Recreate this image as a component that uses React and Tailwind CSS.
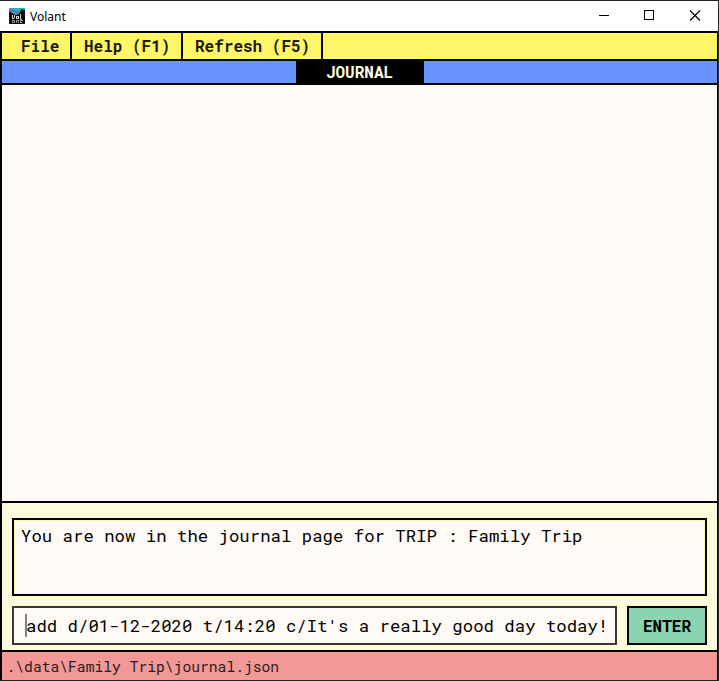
const mono = "font-['Roboto_Mono','DejaVu_Sans_Mono',monospace] whitespace-pre";

function AppIcon() {
  return (
    <svg width="16" height="16" viewBox="0 0 16 16" shapeRendering="crispEdges">
      <rect width="16" height="16" fill="#0a0a0c" />
      <path d="M0 0h16v2h-2v-1h-2v2h-1v2h-1v1H8v1H6V6H4V5H2V4H0z" fill="#12b5b8" />
      <path d="M0 2h5v1h4v1h2v1H7V4H0z" fill="#a44db4" />
      <path d="M3.500 7v3h1v1M5.500 7v3" fill="none" stroke="#d8d8d8" />
      <path d="M7.500 8.500h2v2h-2zM11.500 6v5h1" fill="none" stroke="#d0d0d0" />
      <path d="M3.500 12.500h2v2h-2zM7.500 15v-2.500h2V15M11.500 11v3.500h1.500M10.500 12.500h3" fill="none" stroke="#8f8f8f" />
    </svg>
  );
}

function TitleBar() {
  return (
    <header className="flex h-[31px] shrink-0 items-center border-t border-r border-[#222124] bg-white">
      <div className="ml-[9px]"><AppIcon /></div>
      <span className="ml-[5px] mt-[2px] font-['Noto_Sans',sans-serif] text-[12px] leading-4 text-black">Volant</span>
      <svg className="ml-auto mr-4" width="104" height="12" viewBox="0 0 104 12" fill="none" stroke="#000" shapeRendering="crispEdges">
        <path d="M1 5.500h10" />
        <rect x="46.500" y="0.500" width="9" height="9" />
        <path d="M92 0.500l10 10M102 0.500l-10 10" strokeWidth="1.200" shapeRendering="auto" />
      </svg>
    </header>
  );
}

function MenuItem({ children, className }) {
  return (
    <button className={`${mono} h-full border-r-2 border-black text-left text-[16px] font-bold leading-[26px] text-[#1c1b0b] ${className}`}>
      {children}
    </button>
  );
}

export default function App() {
  return (
    <div className="flex h-[681px] w-[719px] flex-col overflow-hidden border-b border-[#242224] bg-white">
      <TitleBar />
      <div className="flex min-h-0 flex-1 border-r border-[#29272a]">
        <main className="flex min-w-0 flex-1 flex-col border-l-2 border-r border-t-2 border-black">
          <nav className="flex h-[26px] shrink-0 bg-[#fff568]">
            <MenuItem className="w-[70px] pl-[19px]">File</MenuItem>
            <MenuItem className="w-[111px] pl-[12px]">Help (F1)</MenuItem>
            <MenuItem className="w-[140px] pl-[12px]">Refresh (F5)</MenuItem>
          </nav>
          <div className="flex h-[26px] shrink-0 border-y-2 border-black bg-[#6792ff] pl-[294px]">
            <h1 className={`${mono} w-[128px] bg-black pr-px text-center text-[16px] font-bold leading-[22px] text-[#fffee0]`}>JOURNAL</h1>
          </div>
          <section className="h-[416px] shrink-0 bg-[#fffaf5]" />
          <section className="flex h-[151px] shrink-0 flex-col gap-[10px] border-y-2 border-black bg-[#fbfcdc] pl-[10px] pr-[10px] pt-[15px]">
            <div className="h-[78px] shrink-0 border-2 border-black bg-[#fffaf5]">
              <div className={`${mono} h-full border border-[#fffb9c] pl-[6px] pt-[4px] text-[17.333px] leading-[22px] text-black`}>You are now in the journal page for TRIP : Family Trip</div>
            </div>
            <div className="flex h-[39px] shrink-0 gap-[10px]">
              <div className="flex w-[605px] items-center border-2 border-[#393739] bg-[#fffaf5] pl-[11px]">
                <span className="h-[23px] w-[2px] shrink-0 bg-[#85817e]" />
                <span className={`${mono} -ml-px text-[17.333px] leading-[22px] text-black`}>add d/01-12-2020 t/14:20 c/It's a really good day today!</span>
              </div>
              <button className={`${mono} w-[80px] border-2 border-black bg-[#8bd4b1] text-center text-[16px] font-bold text-black`}>ENTER</button>
            </div>
          </section>
          <footer className={`${mono} min-h-0 flex-1 bg-[#f29897] pl-[4.500px] pt-[5px] text-[14.667px] leading-[20px] text-[#2b1b1b]`}>.\data\Family Trip\journal.json</footer>
        </main>
      </div>
    </div>
  );
}
